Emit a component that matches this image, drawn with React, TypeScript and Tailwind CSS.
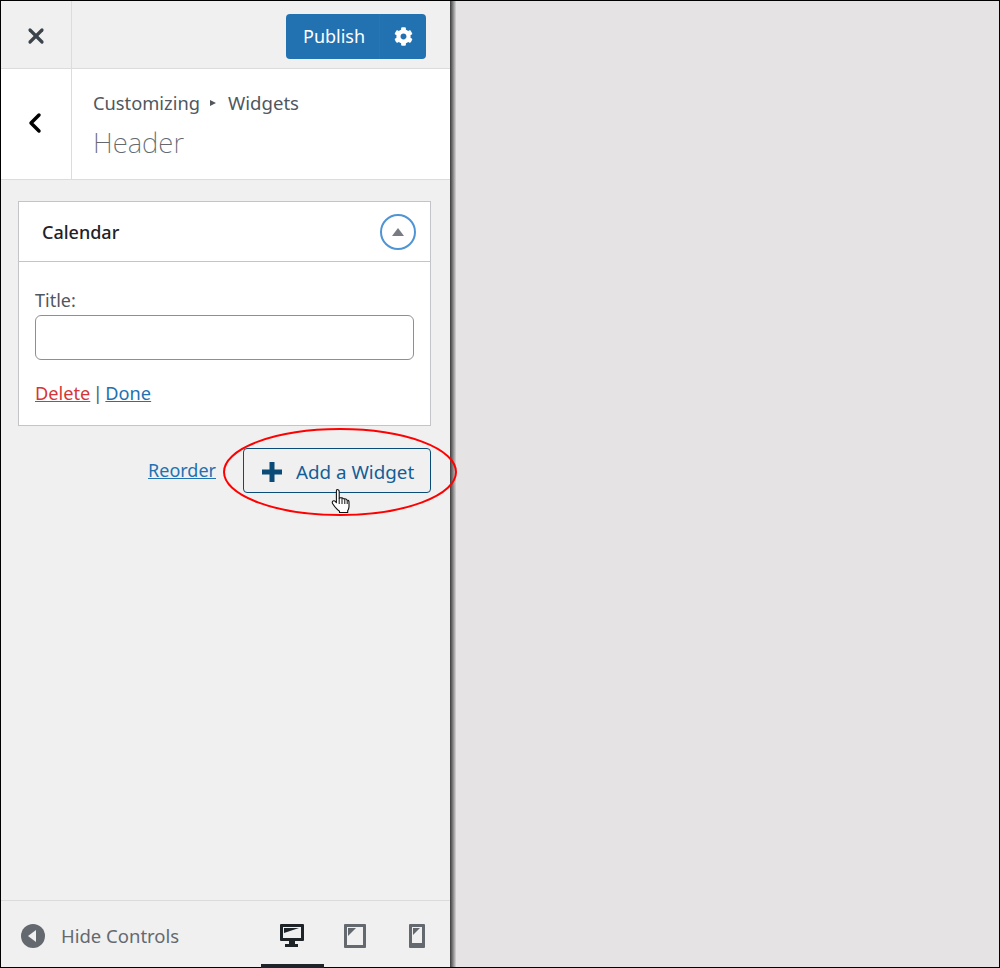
import { ChevronLeft, X } from 'lucide-react'
import { FaCog } from 'react-icons/fa'

function HandCursor() {
  return (
    <svg width="20" height="26" viewBox="0 0 20 26" className="absolute left-[330px] top-[487px]">
      <path
        d="M6 1.500c1.300 0 2.200.9 2.200 2.100v6.500l1.400-.3c1.300-.3 2.300.1 2.700 1l1.100 0c1.200-.2 2.100.3 2.400 1.200 1.300-.1 2.200.7 2.200 2v4.500c0 1.700-.5 3-1.300 4.100V24.500H8.500v-1.300c-2.300-1.400-4.900-4.500-6.800-7.500-.7-1.100-.5-2.200.3-2.700.9-.5 1.800-.2 2.500.6l.9 1.100V3.600c0-1.200.3-2.100.6-2.100z"
        fill="#fff"
        stroke="#111"
        strokeWidth="1.100"
        strokeLinejoin="round"
      />
      <path d="M8.200 10v6M11 10v6M13.800 11v5M16.200 12.500V16" stroke="#111" strokeWidth="1" fill="none" />
    </svg>
  )
}

function DeviceIcons() {
  return (
    <div className="flex h-full items-start pr-[2px]">
      <div className="flex h-[67px] w-[63px] flex-col items-center border-b-[4px] border-[#1d2327] pr-[1px] pt-[23px]">
        <svg width="24" height="24" viewBox="0 0 24 24">
          <path d="M1 0h22a1 1 0 0 1 1 1v15a1 1 0 0 1-1 1H1a1 1 0 0 1-1-1V1a1 1 0 0 1 1-1z" fill="#1d2327" />
          <path d="M3 3h18v11H3z" fill="#f0f0f1" />
          <path d="M4 4h15l-15 5z" fill="#1d2327" />
          <path d="M9 17h6v3h3v3H5v-3h4z" fill="#1d2327" />
        </svg>
      </div>
      <div className="flex w-[62px] justify-center pt-[23px]">
        <svg width="22" height="24" viewBox="0 0 22 24">
          <path d="M1 0h20a1 1 0 0 1 1 1v22a1 1 0 0 1-1 1H1a1 1 0 0 1-1-1V1a1 1 0 0 1 1-1z" fill="#646970" />
          <path d="M3 3h16v18H3z" fill="#f0f0f1" />
          <path d="M4 4h8L4 12z" fill="#646970" />
        </svg>
      </div>
      <div className="flex w-[62px] justify-center pt-[23px]">
        <svg width="16" height="24" viewBox="0 0 16 24">
          <path d="M1 0h14a1 1 0 0 1 1 1v22a1 1 0 0 1-1 1H1a1 1 0 0 1-1-1V1a1 1 0 0 1 1-1z" fill="#646970" />
          <path d="M3 3h10v16H3z" fill="#f0f0f1" />
          <path d="M4 4h7L4 11z" fill="#646970" />
        </svg>
      </div>
    </div>
  )
}

export default function App() {
  return (
    <div className="relative flex h-[968px] w-[1000px] border border-black bg-[#e5e3e4] font-['Noto_Sans',sans-serif] text-[#50575e]">
      <div className="flex w-[449px] shrink-0 flex-col bg-[#f0f0f1]">
        <div className="flex h-[68px] shrink-0 border-b border-[#dcdcde]">
          <div className="flex w-[71px] items-center justify-center border-r border-[#dcdcde] pt-[2px]">
            <X size={24} strokeWidth={3.2} className="text-[#3c434a]" />
          </div>
          <div className="flex flex-1 items-start justify-end pr-[24px] pt-[13px]">
            <div className="flex h-[45px] w-[140px] items-center rounded-[4px] bg-[#2271b1] text-white">
              <span className="w-[94px] border-r border-[#2675b4] pl-[17px] text-[18px] leading-[45px]">Publish</span>
              <span className="flex h-full flex-1 items-center justify-center">
                <FaCog size={19} className="text-white" />
              </span>
            </div>
          </div>
        </div>

        <div className="flex h-[111px] shrink-0 border-b border-[#dcdcde] bg-white">
          <div className="flex w-[71px] items-center justify-center border-r border-[#dcdcde] pb-[2px] pr-[2px]">
            <ChevronLeft size={32} strokeWidth={2.600} className="text-black" />
          </div>
          <div className="pl-[21px] pt-[20px]">
            <div className="flex h-[27px] items-center text-[18.300px]">
              Customizing
              <span className="ml-[10px] mr-[12px] h-0 w-0 border-y-[3.500px] border-l-[6px] border-y-transparent border-l-[#50575e]" />
              <span className="text-[18.600px]">Widgets</span>
            </div>
            <div className="mt-[7px] text-[27.600px] font-extralight leading-[38px] text-[#646970]">Header</div>
          </div>
        </div>

        <div className="flex-1 pl-[17px] pr-[19px] pt-[21px]">
          <div className="border border-[#c3c4c7] bg-white">
            <div className="flex h-[60px] items-center justify-between border-b border-[#c3c4c7] pl-[23px] pr-[14px]">
              <span className="pt-[2px] text-[18px] font-medium text-[#1d2327]">Calendar</span>
              <span className="flex h-[36px] w-[36px] items-center justify-center rounded-full border-2 border-[#4f94d4]">
                <span className="h-0 w-0 border-x-[6px] border-b-[8px] border-x-transparent border-b-[#787c82]" />
              </span>
            </div>
            <div className="px-[16px] pb-[18px] pt-[26px]">
              <div className="text-[18px] leading-[25px]">Title:</div>
              <div className="mt-[2px] h-[45px] rounded-[6px] border border-[#8c8f94]" />
              <div className="mt-[20px] flex gap-[2.500px] text-[18.200px] leading-[27px]">
                <span className="text-[#d63638] underline">Delete</span>
                <span>|</span>
                <span className="text-[#2271b1] underline">Done</span>
              </div>
            </div>
          </div>

          <div className="mt-[22px] flex items-center justify-end gap-[27px]">
            <span className="text-[18px] text-[#2271b1] underline">Reorder</span>
            <div className="flex h-[45px] w-[188px] items-center rounded-[4px] border border-[#0a4b78] pl-[18px] pt-[2px] text-[18.800px] text-[#135e96]">
              <svg width="20" height="20" viewBox="0 0 20 20" className="mr-[14px]">
                <path d="M7.500 0h5v7.500H20v5h-7.500V20h-5v-7.500H0v-5h7.500z" fill="#0a4b78" />
              </svg>
              <span className="pt-[2px]">Add a Widget</span>
            </div>
          </div>
        </div>

        <div className="flex h-[67px] shrink-0 border-t border-[#dcdcde]">
          <div className="flex flex-1 items-center pl-[20px] pt-[4px]">
            <svg width="24" height="24" viewBox="0 0 24 24" className="mr-[16px]">
              <circle cx="12" cy="12" r="12" fill="#646970" />
              <path d="M15 6v12l-8-6z" fill="#f0f0f1" />
            </svg>
            <span className="text-[18.500px] text-[#646970]">Hide Controls</span>
          </div>
          <DeviceIcons />
        </div>
      </div>

      <div className="h-full w-[6px] bg-gradient-to-r from-[#3c3c3c] to-[#d8d6d7]" />

      {/* annotation drawn over the screenshot */}
      <svg width="240" height="92" viewBox="0 0 240 92" className="absolute left-[222px] top-[426px]">
        <ellipse cx="117" cy="45" rx="116" ry="43" fill="none" stroke="#f00" strokeWidth="2" />
      </svg>
      <HandCursor />
    </div>
  )
}
